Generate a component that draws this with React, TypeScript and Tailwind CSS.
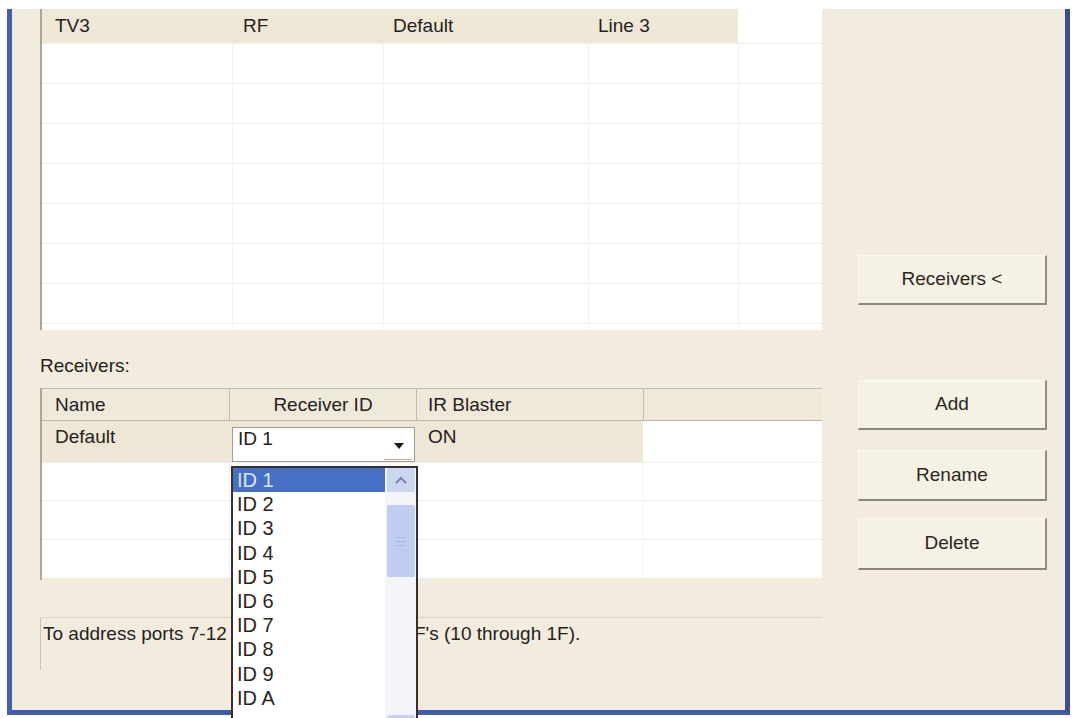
import React from "react";

const FONT = "font-['Liberation_Sans',Arial,sans-serif]";

const topWidths = ["w-[190px]", "w-[151px]", "w-[205px]", "w-[150px]", "w-[84px]"];
const topPads = ["pl-[13px]", "pl-[11px]", "pl-[10px]", "pl-[10px]", "pl-[10px]"];
const topFirst = ["TV3", "RF", "Default", "Line 3", ""];

function DeviceList() {
  return (
    <div className="h-[321px] border-l-2 border-[#aba697] bg-white overflow-hidden">
      <div className="flex h-[34px]">
        {topFirst.map((t, i) => (
          <div
            key={i}
            className={`${topWidths[i]} ${topPads[i]} flex items-center ${
              i < 4 ? "bg-[#efe8d7]" : "bg-white"
            }`}
          >
            {t}
          </div>
        ))}
      </div>
      {Array.from({ length: 8 }).map((_, r) => (
        <div key={r} className="flex h-[40px] border-t border-[#efefef]">
          {topWidths.map((w, i) => (
            <div
              key={i}
              className={`${w} ${i > 0 ? "border-l border-[#f1f1f1]" : ""}`}
            />
          ))}
        </div>
      ))}
    </div>
  );
}

const rxWidths = ["w-[187px]", "w-[187px]", "w-[227px]", "w-[179px]"];

function ComboArrow() {
  return (
    <svg width="10" height="6" viewBox="0 0 10 6" className="block">
      <path d="M0 0 H10 L5 6 Z" fill="#1e1a18" />
    </svg>
  );
}

function ReceiverTable() {
  return (
    <div className="h-[192px] border-l-2 border-[#aba697] overflow-hidden">
      {/* header */}
      <div className="flex h-[33px] border-t border-b border-t-[#b7c2bd] border-b-[#bdb7a8] bg-[#efe9da]">
        <div className={`${rxWidths[0]} pl-[13px] flex items-center`}>Name</div>
        <div className={`${rxWidths[1]} border-l border-[#c2bcad] flex items-center justify-center`}>
          Receiver ID
        </div>
        <div className={`${rxWidths[2]} border-l border-[#c2bcad] pl-[11px] flex items-center`}>
          IR Blaster
        </div>
        <div className={`${rxWidths[3]} border-l border-[#c2bcad]`} />
      </div>
      {/* selected row */}
      <div className="flex h-[41px]">
        <div className={`${rxWidths[0]} bg-[#eee7d5] pl-[13px] pt-[5px]`}>Default</div>
        <div className={`${rxWidths[1]} bg-[#eee7d5] pl-[3px] pt-[6px]`}>
          <div className="relative w-[183px] h-[35px] border border-[#a19d90] bg-white pl-[5px] leading-[22px]">
            ID 1
            <div className="absolute right-[10px] top-[15px]">
              <ComboArrow />
            </div>
            <div className="absolute right-[2px] bottom-[1px] w-[28px] h-[1px] bg-[#d6a48e]" />
          </div>
        </div>
        <div className={`${rxWidths[2]} bg-[#eee7d5] pl-[12px] pt-[5px]`}>ON</div>
        <div className={`${rxWidths[3]} bg-white`} />
      </div>
      {["h-[38px]", "h-[39px]", "h-[39px]"].map((h, r) => (
        <div key={r} className={`flex ${h} border-t border-[#efefef] bg-white`}>
          {rxWidths.map((w, i) => (
            <div key={i} className={`${w} ${i > 0 ? "border-l border-[#f3f3f3]" : ""}`} />
          ))}
        </div>
      ))}
    </div>
  );
}

function Button({ label, h, mt }: { label: string; h: string; mt: string }) {
  return (
    <button
      className={`${h} ${mt} w-[189px] flex items-center justify-center bg-[#f5f1e5] border-t border-l border-t-[#faf8f1] border-l-[#faf8f1] border-r-2 border-b-2 border-r-[#928d82] border-b-[#8c877c] text-[19px] text-[#2b2622] ${FONT}`}
    >
      {label}
    </button>
  );
}

const ids = ["ID 1", "ID 2", "ID 3", "ID 4", "ID 5", "ID 6", "ID 7", "ID 8", "ID 9", "ID A"];

function IdDropdown() {
  return (
    <div className="absolute left-[219px] top-[457px] w-[187px] h-[262px] bg-white border-t-2 border-l-2 border-r-2 border-[#3b2e2d] flex overflow-hidden">
      <div className="w-[152px] text-[20px] text-[#2a2522]">
        {ids.map((id, i) => (
          <div
            key={id}
            className={`h-[24.2px] leading-[24.2px] pl-[4px] ${
              i === 0 ? "bg-[#4470c6] text-[#dfe6f6]" : ""
            }`}
          >
            {id}
          </div>
        ))}
      </div>
      <div className="w-[31px] bg-[#f4f5f9] flex flex-col pl-[2px] pr-[1px]">
        <div className="h-[24px] rounded-[2px] bg-[#cbd7f1] flex items-center justify-center">
          <svg width="14" height="9" viewBox="0 0 14 9">
            <path d="M2 7 L7 2 L12 7" fill="none" stroke="#7385b3" strokeWidth="2" />
          </svg>
        </div>
        <div className="h-[72px] mt-[13px] rounded-[2px] bg-[#bfcdef] flex flex-col items-center justify-center gap-[3px]">
          <div className="w-[10px] h-[1px] bg-[#a9b9e3]" />
          <div className="w-[10px] h-[1px] bg-[#a9b9e3]" />
          <div className="w-[10px] h-[1px] bg-[#a9b9e3]" />
        </div>
        <div className="flex-1" />
        <div className="h-[13px] rounded-t-[2px] bg-[#c6d2ef]" />
      </div>
    </div>
  );
}

export default function App() {
  return (
    <div className={`w-[1074px] h-[718px] bg-white pt-[9px] pl-[7px] overflow-hidden ${FONT} text-[19px] text-[#262120]`}>
      <div className="relative w-[1063px] h-[706px] bg-[#f2ecdf] border-l-[5px] border-r-[5px] border-b-[5px] border-l-[#4160b4] border-r-[#3f4f8d] border-b-[#405cab] flex pl-[28px]">
        <div className="w-[782px] flex flex-col leading-[22px]">
          <DeviceList />
          <div className="mt-[25px] h-[22px]">Receivers:</div>
          <div className="mt-[11px]">
            <ReceiverTable />
          </div>
          <div className="mt-[37px] h-[53px] border-t border-l border-t-[#d8d2c2] border-l-[#cbc5b5] pl-[2px] pt-[5px] flex whitespace-nowrap">
            <span className="w-[188px] overflow-hidden">To address ports 7-12</span>
            <span className="ml-[183px]">F's (10 through 1F).</span>
          </div>
        </div>
        <div className="ml-[36px] w-[189px] flex flex-col">
          <Button label="Receivers <" h="h-[50px]" mt="mt-[246px]" />
          <Button label="Add" h="h-[50px]" mt="mt-[75px]" />
          <Button label="Rename" h="h-[51px]" mt="mt-[20px]" />
          <Button label="Delete" h="h-[52px]" mt="mt-[17px]" />
        </div>
        <IdDropdown />
      </div>
    </div>
  );
}
